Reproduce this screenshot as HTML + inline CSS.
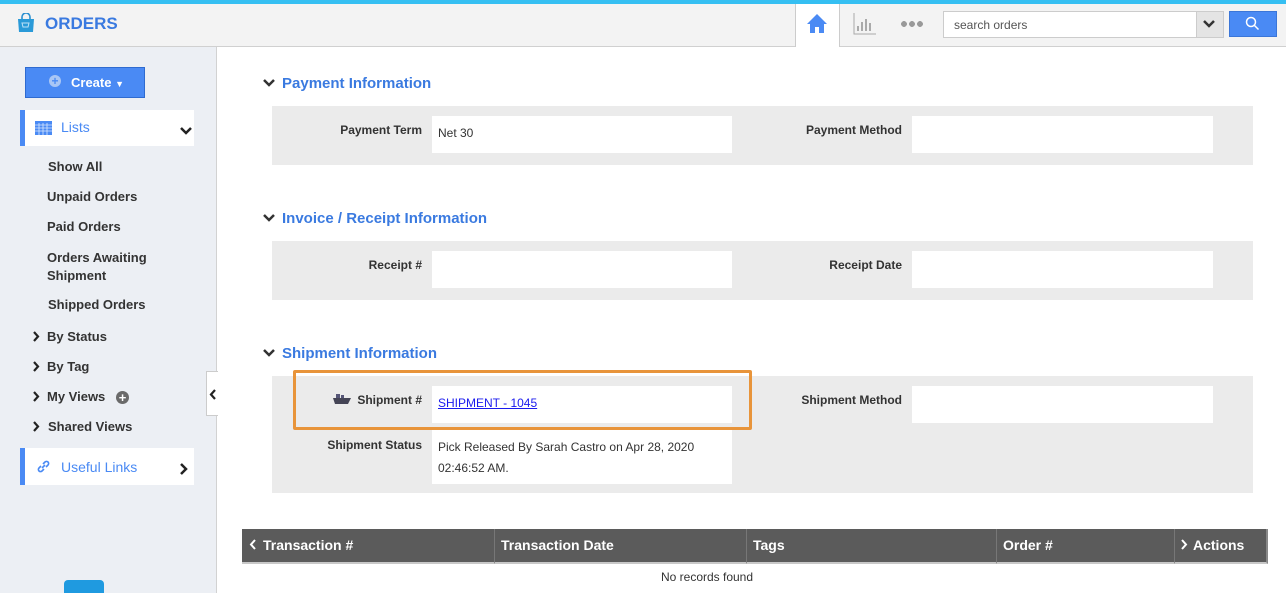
<!DOCTYPE html>
<html><head><meta charset="utf-8"><style>
*{box-sizing:border-box;margin:0;padding:0}
body{width:1286px;height:593px;overflow:hidden;font-family:"Liberation Sans",Arial,sans-serif;background:#fff;position:relative;color:#333}
.a{position:absolute}
.top{left:0;top:0;width:1286px;height:4px;background:#35bff2}
.hdr{left:0;top:4px;width:1286px;height:43px;background:#f3f3f3;border-bottom:1px solid #d0d0d0}
.side{left:0;top:47px;width:217px;height:546px;background:#eceff4;border-right:1px solid #d2d2d2}
.nav{font-size:13px;font-weight:bold;color:#333}
.h{font-size:15px;font-weight:bold;color:#3a7ae0}
.box{background:#ebebeb;left:272px;width:981px}
.lbl{font-size:12px;font-weight:bold;color:#333;text-align:right}
.in{background:#fff;width:300px;height:37px;font-size:12px;color:#333;padding:10px 6px}
.th{top:529px;height:35px;background:#5b5b5b;border-bottom:2px solid #c8c8c8;color:#fff;font-size:14px;font-weight:bold;padding:8px 6px}
</style></head><body>
<div class="a top"></div>
<div class="a hdr"></div>
<svg class="a" style="left:17px;top:13px" width="18" height="19" viewBox="0 0 18 19"><path d="M5 6V4a4 4 0 0 1 8 0v2" fill="none" stroke="#2a8fd0" stroke-width="1.6"/><path d="M1 6h16l-1 13H2z" fill="#2a9ad8"/><path d="M5 10h7l-1 4H6z" fill="none" stroke="#bfe3f7" stroke-width="1"/></svg>
<div class="a" style="left:45px;top:14px;font-size:17px;font-weight:bold;color:#3a7ae0">ORDERS</div>
<div class="a" style="left:795px;top:4px;width:45px;height:43px;background:#fff;border-left:1px solid #ccc;border-right:1px solid #ccc"></div>
<svg class="a" style="left:806px;top:13px" width="22" height="21" viewBox="0 0 22 21"><path d="M11 1L1 11h3v9h5v-6h4v6h5v-9h3z" fill="#4a8af4"/></svg>
<svg class="a" style="left:853px;top:13px" width="24" height="22" viewBox="0 0 24 22"><path d="M1 0v21h22" fill="none" stroke="#aaa"/><path d="M5 18v-5M9 18v-9M13 18v-12M17 18v-8" stroke="#aaa" stroke-width="2"/></svg>
<div class="a" style="left:901px;top:21px;width:22px;height:6px;background:radial-gradient(circle 3px at 3px 3px,#999 2.8px,transparent 3px),radial-gradient(circle 3px at 11px 3px,#999 2.8px,transparent 3px),radial-gradient(circle 3px at 19px 3px,#999 2.8px,transparent 3px)"></div>
<div class="a" style="left:943px;top:11px;width:281px;height:27px;border:1px solid #ccc;background:#fff;font-size:12px;color:#555;padding:6px 10px">search orders</div>
<div class="a" style="left:1196px;top:12px;width:27px;height:25px;background:#e4e4e4;border-left:1px solid #ccc"></div>
<svg class="a" style="left:1203px;top:20px" width="12" height="9" viewBox="0 0 12 9"><path d="M1 1l5 5 5-5" fill="none" stroke="#333" stroke-width="2.5"/></svg>
<div class="a" style="left:1229px;top:11px;width:48px;height:26px;background:#4a8af4;border:1px solid #3b76d8"></div>
<svg class="a" style="left:1245px;top:16px" width="15" height="15" viewBox="0 0 15 15"><circle cx="6" cy="6" r="4.5" fill="none" stroke="#fff" stroke-width="1.5"/><path d="M9.5 9.5l4 4" stroke="#fff" stroke-width="1.5"/></svg>

<div class="a side"></div>
<div class="a" style="left:25px;top:67px;width:120px;height:31px;background:#4a8af4;border:1px solid #2f6bd0;color:#fff;font-size:13px;font-weight:bold;padding:7px 0 0 45px">Create <span style="font-size:9px">▼</span></div>
<div class="a" style="left:49px;top:75px;width:12px;height:12px;border-radius:50%;background:#a9c6f5;color:#4a8af4;font-size:12px;line-height:12px;text-align:center;font-weight:bold">+</div>
<div class="a" style="left:20px;top:110px;width:174px;height:36px;background:#fff;border-left:5px solid #4a8af4"></div>
<svg class="a" style="left:35px;top:121px" width="17" height="14" viewBox="0 0 17 14"><rect width="17" height="14" fill="#4a8af4"/><path d="M0 4h17M0 7h17M0 10h17M4 2v12M8 2v12M12 2v12" stroke="#d8e6fd" stroke-width=".8"/></svg>
<div class="a" style="left:61px;top:119px;font-size:14px;color:#4a8af4">Lists</div>
<svg class="a" style="left:180px;top:127px" width="12" height="8" viewBox="0 0 12 8"><path d="M1 1l5 5 5-5" fill="none" stroke="#222" stroke-width="2.5"/></svg>
<div class="a nav" style="left:48px;top:159px">Show All</div>
<div class="a nav" style="left:47px;top:189px">Unpaid Orders</div>
<div class="a nav" style="left:47px;top:219px">Paid Orders</div>
<div class="a nav" style="left:47px;top:249px;line-height:18px">Orders Awaiting<br>Shipment</div>
<div class="a nav" style="left:48px;top:297px">Shipped Orders</div>
<svg class="a" style="left:33px;top:331px" width="7" height="11" viewBox="0 0 7 11"><path d="M1 1l4 4.5L1 10" fill="none" stroke="#222" stroke-width="2.2"/></svg>
<div class="a nav" style="left:47px;top:329px">By Status</div>
<svg class="a" style="left:33px;top:361px" width="7" height="11" viewBox="0 0 7 11"><path d="M1 1l4 4.5L1 10" fill="none" stroke="#222" stroke-width="2.2"/></svg>
<div class="a nav" style="left:47px;top:359px">By Tag</div>
<svg class="a" style="left:33px;top:391px" width="7" height="11" viewBox="0 0 7 11"><path d="M1 1l4 4.5L1 10" fill="none" stroke="#222" stroke-width="2.2"/></svg>
<div class="a nav" style="left:47px;top:389px">My Views</div>
<div class="a" style="left:116px;top:391px;width:13px;height:13px;border-radius:50%;background:#6a6a6a;color:#fff;font-size:13px;line-height:13px;text-align:center;font-weight:bold">+</div>
<svg class="a" style="left:33px;top:421px" width="7" height="11" viewBox="0 0 7 11"><path d="M1 1l4 4.5L1 10" fill="none" stroke="#222" stroke-width="2.2"/></svg>
<div class="a nav" style="left:48px;top:419px">Shared Views</div>
<div class="a" style="left:20px;top:448px;width:174px;height:37px;background:#fff;border-left:5px solid #4a8af4"></div>
<svg class="a" style="left:36px;top:459px" width="15" height="15" viewBox="0 0 15 15"><path d="M6 9l3-3M5 7L3 9a2 2 0 0 0 3 3l2-2M10 8l2-2a2 2 0 0 0-3-3L7 5" fill="none" stroke="#4a8af4" stroke-width="1.6"/></svg>
<div class="a" style="left:61px;top:459px;font-size:14px;color:#4a8af4">Useful Links</div>
<svg class="a" style="left:180px;top:463px" width="8" height="12" viewBox="0 0 8 12"><path d="M1 1l5 5-5 5" fill="none" stroke="#222" stroke-width="2.5"/></svg>
<div class="a" style="left:64px;top:580px;width:40px;height:13px;background:#1f9ae0;border-radius:4px 4px 0 0"></div>
<div class="a" style="left:206px;top:371px;width:12px;height:45px;background:#fff;border:1px solid #ccc;border-right:none"></div>
<svg class="a" style="left:209px;top:389px" width="8" height="11" viewBox="0 0 8 11"><path d="M6 1L2 5.5 6 10" fill="none" stroke="#222" stroke-width="2.2"/></svg>

<svg class="a" style="left:263px;top:79px" width="12" height="9" viewBox="0 0 12 9"><path d="M1 1l5 5 5-5" fill="none" stroke="#333" stroke-width="2.5"/></svg>
<div class="a h" style="left:282px;top:75px">Payment Information</div>
<div class="a box" style="top:106px;height:59px"></div>
<div class="a lbl" style="left:272px;width:150px;top:123px">Payment Term</div>
<div class="a in" style="left:432px;top:116px">Net 30</div>
<div class="a lbl" style="left:752px;width:150px;top:123px">Payment Method</div>
<div class="a in" style="left:912px;top:116px;width:301px"></div>

<svg class="a" style="left:263px;top:214px" width="12" height="9" viewBox="0 0 12 9"><path d="M1 1l5 5 5-5" fill="none" stroke="#333" stroke-width="2.5"/></svg>
<div class="a h" style="left:282px;top:210px">Invoice / Receipt Information</div>
<div class="a box" style="top:241px;height:59px"></div>
<div class="a lbl" style="left:272px;width:150px;top:258px">Receipt #</div>
<div class="a in" style="left:432px;top:251px"></div>
<div class="a lbl" style="left:752px;width:150px;top:258px">Receipt Date</div>
<div class="a in" style="left:912px;top:251px;width:301px"></div>

<svg class="a" style="left:263px;top:349px" width="12" height="9" viewBox="0 0 12 9"><path d="M1 1l5 5 5-5" fill="none" stroke="#333" stroke-width="2.5"/></svg>
<div class="a h" style="left:282px;top:345px">Shipment Information</div>
<div class="a box" style="top:376px;height:117px"></div>
<svg class="a" style="left:333px;top:393px" width="18" height="12" viewBox="0 0 18 12"><path d="M3 1h4v4H3zM8 2h3v3H8z" fill="#557"/><path d="M0 5h18l-3 6H2z" fill="#445"/></svg>
<div class="a lbl" style="left:272px;width:150px;top:393px">Shipment #</div>
<div class="a in" style="left:432px;top:386px;height:37px;padding-top:10px"><span style="color:#1a1aee;text-decoration:underline">SHIPMENT - 1045</span></div>
<div class="a lbl" style="left:752px;width:150px;top:393px">Shipment Method</div>
<div class="a in" style="left:912px;top:386px;width:301px"></div>
<div class="a lbl" style="left:272px;width:150px;top:438px">Shipment Status</div>
<div class="a in" style="left:432px;top:428px;height:56px;line-height:21px;padding:9px 6px">Pick Released By Sarah Castro on Apr 28, 2020 02:46:52 AM.</div>
<div class="a" style="left:293px;top:370px;width:459px;height:60px;border:3px solid #e8943a;border-radius:2px"></div>

<div class="a th" style="left:242px;width:252px;padding-left:21px">Transaction #</div>
<svg class="a" style="left:249px;top:539px" width="7" height="11" viewBox="0 0 7 11"><path d="M6 1L2 5.5 6 10" fill="none" stroke="#fff" stroke-width="2"/></svg>
<div class="a th" style="left:494px;width:252px;border-left:1px solid #777">Transaction Date</div>
<div class="a th" style="left:746px;width:250px;border-left:1px solid #777">Tags</div>
<div class="a th" style="left:996px;width:178px;border-left:1px solid #777">Order #</div>
<div class="a th" style="left:1174px;width:94px;border-left:1px solid #777;border-right:2px solid #888;padding-left:18px">Actions</div>
<svg class="a" style="left:1181px;top:539px" width="7" height="11" viewBox="0 0 7 11"><path d="M1 1l4 4.5L1 10" fill="none" stroke="#fff" stroke-width="2"/></svg>
<div class="a" style="left:242px;width:930px;top:570px;text-align:center;font-size:12px;color:#333">No records found</div>
</body></html>
